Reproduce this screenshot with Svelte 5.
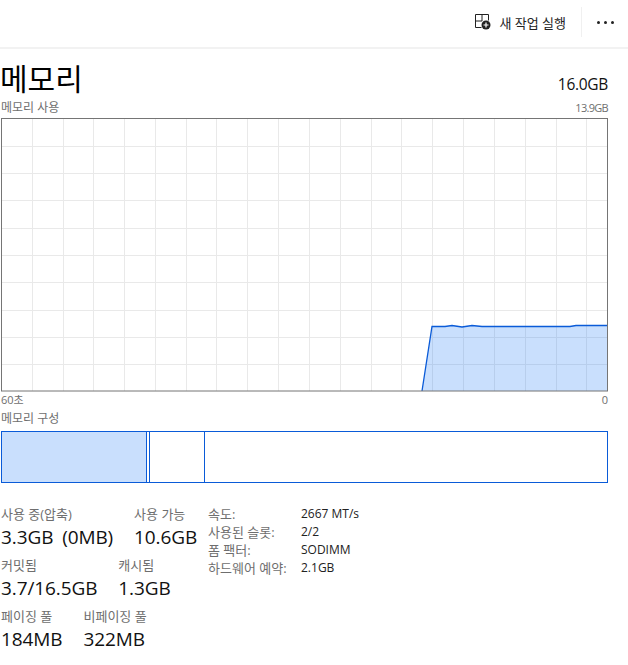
<script>
  const verticals = [32, 63, 93, 124, 155, 186, 216, 247, 278, 309, 340, 371, 401, 432, 463, 494, 525, 556, 586];
  const horizontals = [146, 173, 200, 228, 255, 282, 310, 337, 364];
  const usage = '422,391 432,326.5 445,326.5 452,325.5 462,327 472,325.5 482,326.5 570,326.5 576,325.5 607,325.5';

  const stats = [
    [{ label: '사용 중(압축)', value: '3.3GB (0MB)' }, { label: '사용 가능', value: '10.6GB' }],
    [{ label: '커밋됨', value: '3.7/16.5GB' }, { label: '캐시됨', value: '1.3GB' }],
    [{ label: '페이징 풀', value: '184MB' }, { label: '비페이징 풀', value: '322MB' }]
  ];
  const specs = [
    ['속도:', '2667 MT/s'],
    ['사용된 슬롯:', '2/2'],
    ['폼 팩터:', 'SODIMM'],
    ['하드웨어 예약:', '2.1GB']
  ];
</script>

<div class="page">
  <header class="toolbar">
    <button class="run">
      <svg width="16" height="16" viewBox="0 0 16 16">
        <path d="M.5 .5h13v6M.5 .5v13h6M7 .5v6.500M.5 7h6.500" fill="none" stroke="#222" stroke-width="1"/>
        <circle cx="11" cy="11" r="4.500" fill="#222"/>
        <path d="M11 8.500v5M8.500 11h5" stroke="#fff" stroke-width="1.200"/>
      </svg>
      <span>새 작업 실행</span>
    </button>
    <div class="sep"></div>
    <div class="more"><i></i><i></i><i></i></div>
  </header>

  <section class="head">
    <h1>메모리</h1>
    <div class="total">16.0GB</div>
  </section>

  <div class="caption top"><span>메모리 사용</span><span class="max">13.9GB</span></div>

  <svg class="chart" width="608" height="274" viewBox="0 118 608 274">
    {#each verticals as x}
      <line x1={x + 0.5} x2={x + 0.5} y1="118" y2="391" stroke="#e9e9e9"/>
    {/each}
    {#each horizontals as y}
      <line x1="1" x2="607" y1={y + 0.5} y2={y + 0.5} stroke="#e9e9e9"/>
    {/each}
    <polygon points="{usage} 607,391" fill="#0a6cf5" fill-opacity="0.22"/>
    <polyline points={usage} fill="none" stroke="#0a5bd8" stroke-width="1.300"/>
    <rect x="1.500" y="118.500" width="606" height="272.500" fill="none" stroke="#757575"/>
  </svg>

  <div class="caption axis"><span>60초</span><span>0</span></div>
  <div class="caption makeup"><span>메모리 구성</span></div>

  <div class="bar">
    <div class="used"></div>
    <div class="modified"></div>
    <div class="standby"></div>
  </div>

  <section class="details">
    <div class="left">
      {#each stats as row}
        <div class="row">
          {#each row as s}
            <div class="stat">
              <div class="label">{s.label}</div>
              <div class="value">{s.value}</div>
            </div>
          {/each}
        </div>
      {/each}
    </div>
    <div class="specs">
      {#each specs as [k, v]}
        <div class="label">{k}</div>
        <div class="spec">{v}</div>
      {/each}
    </div>
  </section>
</div>

<style>
  :global(body) {
    margin: 0;
    background: #fff;
  }
  .page {
    width: 628px;
    height: 665px;
    overflow: hidden;
    font-family: "Open Sans", "Noto Sans CJK KR", sans-serif;
    color: #111;
  }
  .toolbar {
    height: 44px;
    padding-bottom: 3px;
    border-bottom: 2px solid #f2f2f2;
    display: flex;
    align-items: center;
    justify-content: flex-end;
  }
  .run {
    display: flex;
    align-items: center;
    gap: 8px;
    border: none;
    background: none;
    padding: 0;
    font: inherit;
    font-size: 13px;
    color: #222;
  }
  .sep {
    width: 1px;
    height: 30px;
    background: #f0f0f0;
    margin-left: 15px;
  }
  .more {
    display: flex;
    gap: 4px;
    margin: 0 14px 0 15px;
  }
  .more i {
    width: 3px;
    height: 3px;
    border-radius: 50%;
    background: #222;
  }
  .head {
    display: flex;
    justify-content: space-between;
    align-items: flex-end;
    padding: 10px 20px 0 0;
    height: 39px;
  }
  h1 {
    margin: 0;
    font-size: 30px;
    font-weight: 400;
    line-height: 39px;
    color: #000;
  }
  .total {
    font-size: 15.500px;
    line-height: 22px;
    letter-spacing: -0.3px;
    margin-bottom: 3px;
  }
  .caption {
    display: flex;
    justify-content: space-between;
    width: 608px;
    padding-left: 1px;
    box-sizing: border-box;
    font-size: 12px;
    line-height: 16px;
    color: #6e6e6e;
  }
  .top {
    margin-top: 2px;
    height: 18px;
  }
  .max {
    font-size: 11px;
    letter-spacing: -0.7px;
  }
  .chart {
    display: block;
  }
  .axis {
    height: 16px;
    font-size: 11px;
  }
  .makeup {
    margin-top: 3px;
    height: 20px;
  }
  .bar {
    width: 607px;
    height: 52px;
    margin-left: 1px;
    box-sizing: border-box;
    border: 1px solid #0a5bd8;
    display: flex;
  }
  .used {
    width: 144px;
    background: #c9dffd;
    border-right: 1px solid #0a5bd8;
  }
  .modified {
    width: 2px;
    border-right: 1px solid #0a5bd8;
  }
  .standby {
    width: 54px;
    border-right: 1px solid #0a5bd8;
  }
  .details {
    display: flex;
    gap: 12px;
    margin-top: 22px;
    padding-left: 1px;
  }
  .left {
    display: flex;
    flex-direction: column;
    gap: 3px;
    width: 195px;
  }
  .row {
    display: flex;
    gap: 21px;
    height: 48px;
  }
  .label {
    font-size: 13px;
    line-height: 18px;
    color: #6e6e6e;
    white-space: nowrap;
  }
  .stat .value {
    font-size: 19px;
    line-height: 29px;
    white-space: nowrap;
    letter-spacing: -0.1px;
    word-spacing: 4px;
    color: #111;
  }
  .specs {
    display: grid;
    grid-template-columns: 93px auto;
    grid-auto-rows: 18px;
    align-content: start;
  }
  .spec {
    font-size: 12px;
    line-height: 18px;
    color: #222;
  }
</style>
